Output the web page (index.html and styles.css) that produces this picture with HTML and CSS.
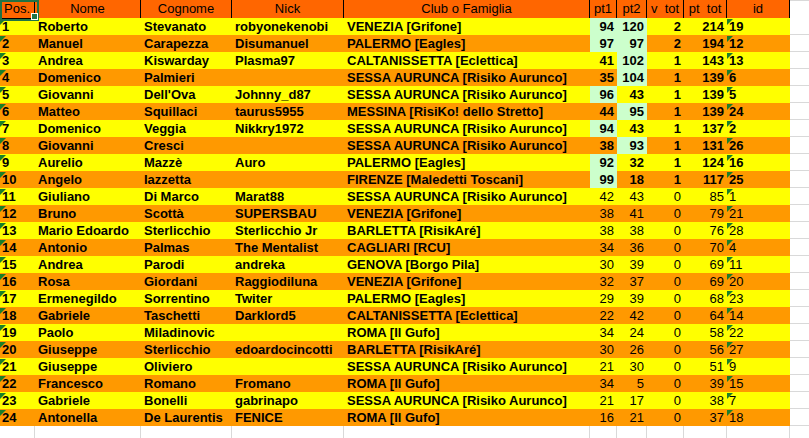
FILE: index.html
```html
<!DOCTYPE html>
<html lang="it">
<head>
<meta charset="utf-8">
<title>Classifica</title>
<link rel="stylesheet" href="styles.css">
</head>
<body>
<div class="sheet">
  <div class="row head">
    <div class="c hd sel">Pos.<span class="handle"></span></div>
    <div class="c hd">Nome</div>
    <div class="c hd">Cognome</div>
    <div class="c hd">Nick</div>
    <div class="c hd">Club o Famiglia</div>
    <div class="c hd">pt1</div>
    <div class="c hd">pt2</div>
    <div class="c hd">v  tot</div>
    <div class="c hd">pt  tot</div>
    <div class="c hd">id</div>
    <div class="c ext"></div>
  </div>

  <div class="row y top"><div class="c pos tri">1</div><div class="c t">Roberto</div><div class="c t">Stevanato</div><div class="c t">robyonekenobi</div><div class="c t">VENEZIA [Grifone]</div><div class="c n g">94</div><div class="c n g">120</div><div class="c n">2</div><div class="c n">214</div><div class="c id tri">19</div><div class="c ext"></div></div>
  <div class="row o top"><div class="c pos tri">2</div><div class="c t">Manuel</div><div class="c t">Carapezza</div><div class="c t">Disumanuel</div><div class="c t">PALERMO [Eagles]</div><div class="c n g">97</div><div class="c n g">97</div><div class="c n">2</div><div class="c n">194</div><div class="c id tri">12</div><div class="c ext"></div></div>
  <div class="row y top"><div class="c pos tri">3</div><div class="c t">Andrea</div><div class="c t">Kiswarday</div><div class="c t">Plasma97</div><div class="c t">CALTANISSETTA [Eclettica]</div><div class="c n">41</div><div class="c n g">102</div><div class="c n">1</div><div class="c n">143</div><div class="c id tri">13</div><div class="c ext"></div></div>
  <div class="row o top"><div class="c pos tri">4</div><div class="c t">Domenico</div><div class="c t">Palmieri</div><div class="c t"></div><div class="c t">SESSA AURUNCA [Risiko Aurunco]</div><div class="c n">35</div><div class="c n g">104</div><div class="c n">1</div><div class="c n">139</div><div class="c id tri">6</div><div class="c ext"></div></div>
  <div class="row y top"><div class="c pos tri">5</div><div class="c t">Giovanni</div><div class="c t">Dell'Ova</div><div class="c t">Johnny_d87</div><div class="c t">SESSA AURUNCA [Risiko Aurunco]</div><div class="c n g">96</div><div class="c n">43</div><div class="c n">1</div><div class="c n">139</div><div class="c id tri">5</div><div class="c ext"></div></div>
  <div class="row o top"><div class="c pos tri">6</div><div class="c t">Matteo</div><div class="c t">Squillaci</div><div class="c t">taurus5955</div><div class="c t">MESSINA [RisiKo! dello Stretto]</div><div class="c n">44</div><div class="c n g">95</div><div class="c n">1</div><div class="c n">139</div><div class="c id tri">24</div><div class="c ext"></div></div>
  <div class="row y top"><div class="c pos tri">7</div><div class="c t">Domenico</div><div class="c t">Veggia</div><div class="c t">Nikkry1972</div><div class="c t">SESSA AURUNCA [Risiko Aurunco]</div><div class="c n g">94</div><div class="c n">43</div><div class="c n">1</div><div class="c n">137</div><div class="c id tri">2</div><div class="c ext"></div></div>
  <div class="row o top"><div class="c pos tri">8</div><div class="c t">Giovanni</div><div class="c t">Cresci</div><div class="c t"></div><div class="c t">SESSA AURUNCA [Risiko Aurunco]</div><div class="c n">38</div><div class="c n g">93</div><div class="c n">1</div><div class="c n">131</div><div class="c id tri">26</div><div class="c ext"></div></div>
  <div class="row y top"><div class="c pos tri">9</div><div class="c t">Aurelio</div><div class="c t">Mazzè</div><div class="c t">Auro</div><div class="c t">PALERMO [Eagles]</div><div class="c n g">92</div><div class="c n">32</div><div class="c n">1</div><div class="c n">124</div><div class="c id tri">16</div><div class="c ext"></div></div>
  <div class="row o top"><div class="c pos tri">10</div><div class="c t">Angelo</div><div class="c t">Iazzetta</div><div class="c t"></div><div class="c t">FIRENZE [Maledetti Toscani]</div><div class="c n g">99</div><div class="c n">18</div><div class="c n">1</div><div class="c n">117</div><div class="c id tri">25</div><div class="c ext"></div></div>
  <div class="row y"><div class="c pos tri">11</div><div class="c t">Giuliano</div><div class="c t">Di Marco</div><div class="c t">Marat88</div><div class="c t">SESSA AURUNCA [Risiko Aurunco]</div><div class="c n">42</div><div class="c n">43</div><div class="c n">0</div><div class="c n">85</div><div class="c id tri">1</div><div class="c ext"></div></div>
  <div class="row o"><div class="c pos tri">12</div><div class="c t">Bruno</div><div class="c t">Scottà</div><div class="c t">SUPERSBAU</div><div class="c t">VENEZIA [Grifone]</div><div class="c n">38</div><div class="c n">41</div><div class="c n">0</div><div class="c n">79</div><div class="c id tri">21</div><div class="c ext"></div></div>
  <div class="row y"><div class="c pos tri">13</div><div class="c t">Mario Edoardo</div><div class="c t">Sterlicchio</div><div class="c t">Sterlicchio Jr</div><div class="c t">BARLETTA [RisikAré]</div><div class="c n">38</div><div class="c n">38</div><div class="c n">0</div><div class="c n">76</div><div class="c id tri">28</div><div class="c ext"></div></div>
  <div class="row o"><div class="c pos tri">14</div><div class="c t">Antonio</div><div class="c t">Palmas</div><div class="c t">The Mentalist</div><div class="c t">CAGLIARI [RCU]</div><div class="c n">34</div><div class="c n">36</div><div class="c n">0</div><div class="c n">70</div><div class="c id tri">4</div><div class="c ext"></div></div>
  <div class="row y"><div class="c pos tri">15</div><div class="c t">Andrea</div><div class="c t">Parodi</div><div class="c t">andreka</div><div class="c t">GENOVA [Borgo Pila]</div><div class="c n">30</div><div class="c n">39</div><div class="c n">0</div><div class="c n">69</div><div class="c id tri">11</div><div class="c ext"></div></div>
  <div class="row o"><div class="c pos tri">16</div><div class="c t">Rosa</div><div class="c t">Giordani</div><div class="c t">Raggiodiluna</div><div class="c t">VENEZIA [Grifone]</div><div class="c n">32</div><div class="c n">37</div><div class="c n">0</div><div class="c n">69</div><div class="c id tri">20</div><div class="c ext"></div></div>
  <div class="row y"><div class="c pos tri">17</div><div class="c t">Ermenegildo</div><div class="c t">Sorrentino</div><div class="c t">Twiter</div><div class="c t">PALERMO [Eagles]</div><div class="c n">29</div><div class="c n">39</div><div class="c n">0</div><div class="c n">68</div><div class="c id tri">23</div><div class="c ext"></div></div>
  <div class="row o"><div class="c pos tri">18</div><div class="c t">Gabriele</div><div class="c t">Taschetti</div><div class="c t">Darklord5</div><div class="c t">CALTANISSETTA [Eclettica]</div><div class="c n">22</div><div class="c n">42</div><div class="c n">0</div><div class="c n">64</div><div class="c id tri">14</div><div class="c ext"></div></div>
  <div class="row y"><div class="c pos tri">19</div><div class="c t">Paolo</div><div class="c t">Miladinovic</div><div class="c t"></div><div class="c t">ROMA [Il Gufo]</div><div class="c n">34</div><div class="c n">24</div><div class="c n">0</div><div class="c n">58</div><div class="c id tri">22</div><div class="c ext"></div></div>
  <div class="row o"><div class="c pos tri">20</div><div class="c t">Giuseppe</div><div class="c t">Sterlicchio</div><div class="c t">edoardocincotti</div><div class="c t">BARLETTA [RisikAré]</div><div class="c n">30</div><div class="c n">26</div><div class="c n">0</div><div class="c n">56</div><div class="c id tri">27</div><div class="c ext"></div></div>
  <div class="row y"><div class="c pos tri">21</div><div class="c t">Giuseppe</div><div class="c t">Oliviero</div><div class="c t"></div><div class="c t">SESSA AURUNCA [Risiko Aurunco]</div><div class="c n">21</div><div class="c n">30</div><div class="c n">0</div><div class="c n">51</div><div class="c id tri">9</div><div class="c ext"></div></div>
  <div class="row o"><div class="c pos tri">22</div><div class="c t">Francesco</div><div class="c t">Romano</div><div class="c t">Fromano</div><div class="c t">ROMA [Il Gufo]</div><div class="c n">34</div><div class="c n">5</div><div class="c n">0</div><div class="c n">39</div><div class="c id tri">15</div><div class="c ext"></div></div>
  <div class="row y"><div class="c pos tri">23</div><div class="c t">Gabriele</div><div class="c t">Bonelli</div><div class="c t">gabrinapo</div><div class="c t">SESSA AURUNCA [Risiko Aurunco]</div><div class="c n">21</div><div class="c n">17</div><div class="c n">0</div><div class="c n">38</div><div class="c id tri">7</div><div class="c ext"></div></div>
  <div class="row o"><div class="c pos tri">24</div><div class="c t">Antonella</div><div class="c t">De Laurentis</div><div class="c t">FENICE</div><div class="c t">ROMA [Il Gufo]</div><div class="c n">16</div><div class="c n">21</div><div class="c n">0</div><div class="c n">37</div><div class="c id tri">18</div><div class="c ext"></div></div>

  <div class="row blank">
    <div class="c gl"></div><div class="c gl"></div><div class="c gl"></div><div class="c gl"></div><div class="c gl"></div><div class="c gl"></div><div class="c gl"></div><div class="c gl"></div><div class="c gl"></div><div class="c gl"></div><div class="c"></div>
  </div>
</div>
</body>
</html>
```
FILE: styles.css
```css
* { box-sizing: border-box; }
html, body { margin: 0; padding: 0; background: #fff; }
body {
  font-family: "Liberation Sans", Arial, sans-serif;
  font-size: 13px;
  color: #000;
  width: 809px;
  height: 438px;
  overflow: hidden;
}
.sheet { display: flex; flex-direction: column; }
.row {
  display: grid;
  grid-template-columns: 35px 106px 91px 112px 246px 27px 30px 37px 43px 63px 19px;
  height: 17px;
}
.row.head { height: 18px; }
.c {
  position: relative;
  white-space: pre;
  overflow: hidden;
  line-height: 17px;
  font-weight: bold;
}
.hd {
  background: #ff6600;
  font-weight: normal;
  text-align: center;
  line-height: 18px;
  border-right: 1px solid #000;
  border-bottom: 2px solid #000;
  overflow: visible;
}
.hd.sel { overflow: visible; z-index: 2; }
.hd.sel::after {
  content: "";
  position: absolute;
  left: 0; top: 0;
  width: 35px; height: 17px;
  border: 2px solid #217346;
}
.handle {
  position: absolute;
  left: 31px; top: 13px;
  width: 7px; height: 7px;
  background: #217346;
  border: 1px solid #fff;
  z-index: 3;
}
.ext { background: #fff; border-bottom: 1px solid #d9d9d9; }
.head .ext { border-top: 1px solid #d9d9d9; }
.y .c { background: #ffff00; }
.o .c { background: #ff9900; }
.y .ext, .o .ext { background: #fff; }
.c.g { background: #ccffcc; }
.t { padding-left: 3px; }
.pos { padding-left: 2px; }
.id { padding-left: 2px; font-weight: normal; }
.n { text-align: right; padding-right: 3px; font-weight: normal; }
.top .n, .top .id { font-weight: bold; }
.tri::before {
  content: "";
  position: absolute;
  left: 0; top: 1px;
  border-top: 6px solid #1a7f2a;
  border-right: 6px solid transparent;
}
.row.blank { height: 12px; }
.gl { border-right: 1px solid #d9d9d9; background: #fff; }
```
